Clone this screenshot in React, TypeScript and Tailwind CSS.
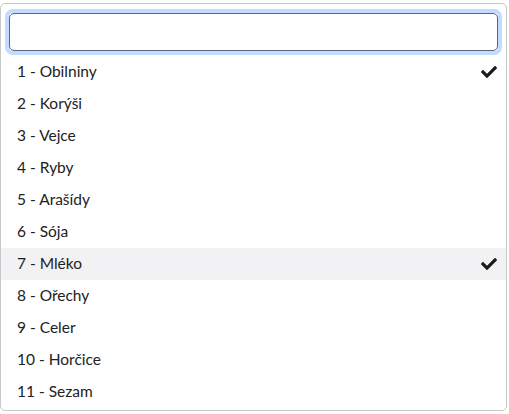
import React from "react";
import { FaCheck } from "react-icons/fa";

const items = [
  { label: "1 - Obilniny", checked: true },
  { label: "2 - Korýši" },
  { label: "3 - Vejce" },
  { label: "4 - Ryby" },
  { label: "5 - Arašídy" },
  { label: "6 - Sója" },
  { label: "7 - Mléko", checked: true, active: true },
  { label: "8 - Ořechy" },
  { label: "9 - Celer" },
  { label: "10 - Horčice" },
  { label: "11 - Sezam" },
];

export default function App() {
  return (
    <div
      className="w-[509px] h-[414px] bg-white overflow-hidden pt-[3px]"
      style={{ fontFamily: "Lato, 'Open Sans', sans-serif" }}
    >
      <div className="w-[507px] h-[408px] bg-white border border-[#c8c8c8] rounded-[5px] overflow-hidden">
        <div className="pl-[4px] pr-[4px] pt-[5px] pb-[1px]">
          <div className="rounded-[8px] border-4 border-[#c2dbfe]">
            <div className="h-[38px] rounded-[5px] border border-[#5f6677] bg-white" />
          </div>
        </div>
        <ul>
          {items.map((it) => (
            <li
              key={it.label}
              className={
                "h-[32px] flex items-center justify-between pl-[16px] pr-[9px] text-[15.5px] text-[#222] " +
                (it.active ? "bg-[#f2f2f4]" : "")
              }
            >
              <span>{it.label}</span>
              {it.checked && <FaCheck className="text-[#1a1a1a] w-[16px] h-[16px]" />}
            </li>
          ))}
        </ul>
      </div>
    </div>
  );
}
